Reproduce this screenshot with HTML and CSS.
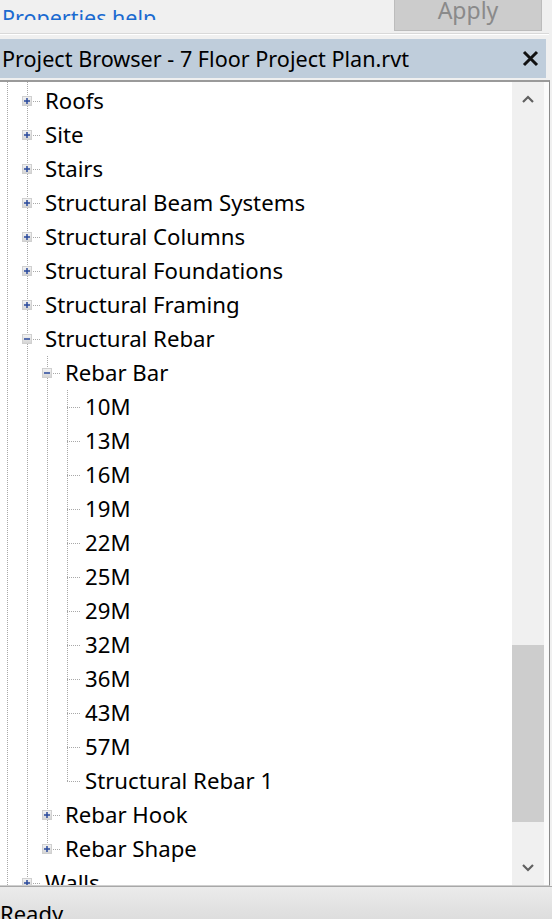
FILE: index.html
```html
<!DOCTYPE html>
<html>
<head>
<meta charset="utf-8">
<link rel="stylesheet" href="styles.css">
</head>
<body>
<div class="top">
  <div class="help-clip"><a class="help">Properties help</a></div>
  <div class="apply">Apply</div>
</div>
<div class="sep"></div>
<div class="titlebar">
  <span class="title">Project Browser - 7 Floor Project Plan.rvt</span>
  <svg class="close" width="17" height="17" viewBox="0 0 17 17"><path d="M2 2 L15 15 M15 2 L2 15" stroke="#111" stroke-width="3" fill="none"/></svg>
</div>
<div class="panel">
  <div class="tree">
    <div class="row"><span class="exp"><i class="box plus"></i></span><span class="label">Roofs</span></div>
    <div class="row"><span class="exp"><i class="box plus"></i></span><span class="label">Site</span></div>
    <div class="row"><span class="exp"><i class="box plus"></i></span><span class="label">Stairs</span></div>
    <div class="row"><span class="exp"><i class="box plus"></i></span><span class="label">Structural Beam Systems</span></div>
    <div class="row"><span class="exp"><i class="box plus"></i></span><span class="label">Structural Columns</span></div>
    <div class="row"><span class="exp"><i class="box plus"></i></span><span class="label">Structural Foundations</span></div>
    <div class="row"><span class="exp"><i class="box plus"></i></span><span class="label">Structural Framing</span></div>
    <div class="row"><span class="exp"><i class="box minus"></i></span><span class="label">Structural Rebar</span></div>
    <div class="row"><span class="ind"></span><span class="exp vfull"><i class="box minus"></i></span><span class="label">Rebar Bar</span></div>
    <div class="row"><span class="ind"></span><span class="ind vline"></span><span class="exp vfull"></span><span class="label">10M</span></div>
    <div class="row"><span class="ind"></span><span class="ind vline"></span><span class="exp vfull"></span><span class="label">13M</span></div>
    <div class="row"><span class="ind"></span><span class="ind vline"></span><span class="exp vfull"></span><span class="label">16M</span></div>
    <div class="row"><span class="ind"></span><span class="ind vline"></span><span class="exp vfull"></span><span class="label">19M</span></div>
    <div class="row"><span class="ind"></span><span class="ind vline"></span><span class="exp vfull"></span><span class="label">22M</span></div>
    <div class="row"><span class="ind"></span><span class="ind vline"></span><span class="exp vfull"></span><span class="label">25M</span></div>
    <div class="row"><span class="ind"></span><span class="ind vline"></span><span class="exp vfull"></span><span class="label">29M</span></div>
    <div class="row"><span class="ind"></span><span class="ind vline"></span><span class="exp vfull"></span><span class="label">32M</span></div>
    <div class="row"><span class="ind"></span><span class="ind vline"></span><span class="exp vfull"></span><span class="label">36M</span></div>
    <div class="row"><span class="ind"></span><span class="ind vline"></span><span class="exp vfull"></span><span class="label">43M</span></div>
    <div class="row"><span class="ind"></span><span class="ind vline"></span><span class="exp vfull"></span><span class="label">57M</span></div>
    <div class="row"><span class="ind"></span><span class="ind vline"></span><span class="exp vhalf"></span><span class="label">Structural Rebar 1</span></div>
    <div class="row"><span class="ind"></span><span class="exp vfull"><i class="box plus"></i></span><span class="label">Rebar Hook</span></div>
    <div class="row"><span class="ind"></span><span class="exp vhalf"><i class="box plus"></i></span><span class="label">Rebar Shape</span></div>
    <div class="row"><span class="exp"><i class="box plus"></i></span><span class="label">Walls</span></div>
  </div>
  <div class="scrollbar">
    <div class="arrow">
      <svg width="12" height="8" viewBox="0 0 12 8"><path d="M1 7 L6 2 L11 7" stroke="#606060" stroke-width="2.2" fill="none"/></svg>
    </div>
    <div class="track">
      <div class="thumb"></div>
    </div>
    <div class="arrow">
      <svg width="12" height="8" viewBox="0 0 12 8"><path d="M1 1 L6 6 L11 1" stroke="#606060" stroke-width="2.2" fill="none"/></svg>
    </div>
  </div>
</div>
<div class="status">Ready</div>
</body>
</html>
```
FILE: styles.css
```css
html, body {
  margin: 0;
  padding: 0;
  background: #f0f0f0;
  width: 552px;
  height: 919px;
  overflow: hidden;
  font-family: "Noto Sans", "Open Sans", sans-serif;
}

.top {
  height: 33px;
  display: flex;
  justify-content: space-between;
  align-items: flex-start;
  background: #f0f0f0;
}

.help-clip {
  height: 20px;
  overflow: hidden;
  padding-left: 2px;
}

.help {
  display: block;
  font-size: 21.5px;
  line-height: 22px;
  margin-top: 7px;
  color: #1a6ad0;
}

.apply {
  width: 148px;
  height: 31px;
  margin-right: 10px;
  box-sizing: border-box;
  border: 1px solid #bcbcbc;
  border-top: none;
  background: #cccccc;
  color: #8a8a8a;
  font-size: 23px;
  line-height: 21px;
  text-align: center;
}

.sep {
  height: 1px;
  border-top: 1px solid #d9d9d9;
  background: #ffffff;
  margin-bottom: 4px;
  width: 549px;
}

.titlebar {
  height: 39px;
  width: 546px;
  background: #bfcddb;
  display: flex;
  align-items: center;
  justify-content: space-between;
  box-sizing: border-box;
  padding-left: 2px;
  padding-right: 7px;
}

.title {
  font-size: 21.6px;
  color: #000;
  line-height: 39px;
}

.close {
  display: block;
}

.panel {
  margin-top: 2px;
  width: 550px;
  height: 806px;
  box-sizing: border-box;
  border-top: 2px solid #9a9a9a;
  border-right: 1px solid #8a8a8a;
  border-bottom: 1px solid #cfcfcf;
  background: #fbfbfb;
  display: flex;
  padding-right: 5px;
}

.tree {
  flex: 1;
  overflow: hidden;
  background-color: #ffffff;
  background-image:
    repeating-linear-gradient(to bottom, #a8a8a8 0 1px, transparent 1px 2px),
    repeating-linear-gradient(to bottom, #a8a8a8 0 1px, transparent 1px 2px);
  background-size: 1px 100%, 1px 100%;
  background-position: 7px 0, 27px 0;
  background-repeat: no-repeat;
  padding-top: 2px;
  padding-left: 17px;
}

.row {
  height: 34px;
  display: flex;
  align-items: center;
}

.ind {
  width: 20px;
  height: 34px;
  flex: none;
  position: relative;
}

.vline::before {
  content: "";
  position: absolute;
  left: 10px;
  top: 0;
  width: 1px;
  height: 34px;
  background: repeating-linear-gradient(to bottom, #a8a8a8 0 1px, transparent 1px 2px);
}

.exp {
  width: 20px;
  height: 34px;
  flex: none;
  position: relative;
}

.exp::after {
  content: "";
  position: absolute;
  left: 10px;
  top: 17px;
  width: 14px;
  height: 1px;
  background: repeating-linear-gradient(to right, #a8a8a8 0 1px, transparent 1px 2px);
}

.vfull::before,
.vhalf::before {
  content: "";
  position: absolute;
  left: 10px;
  top: 0;
  width: 1px;
  height: 34px;
  background: repeating-linear-gradient(to bottom, #a8a8a8 0 1px, transparent 1px 2px);
}

.vhalf::before {
  height: 18px;
}

.box {
  position: absolute;
  left: 5px;
  top: 12px;
  width: 10px;
  height: 10px;
  box-sizing: border-box;
  border: 1px solid #d0d0d0;
  background: linear-gradient(to bottom, #f2f2f2, #d6d6d6);
  z-index: 2;
}

.box::before {
  content: "";
  position: absolute;
  left: 1px;
  top: 3px;
  width: 6px;
  height: 2px;
  background: #2a4a9c;
  transform: scaleY(0.75);
}

.plus::after {
  content: "";
  position: absolute;
  left: 3px;
  top: 1px;
  width: 2px;
  height: 6px;
  background: #2a4a9c;
  transform: scaleX(0.75);
}

.label {
  margin-left: 8px;
  font-size: 22.2px;
  color: #000;
  white-space: nowrap;
  line-height: 34px;
}

.scrollbar {
  width: 32px;
  flex: none;
  background: #f0f0f0;
  display: flex;
  flex-direction: column;
}

.arrow {
  height: 34px;
  flex: none;
  display: flex;
  align-items: center;
  justify-content: center;
}

.track {
  flex: 1;
  display: flex;
  flex-direction: column;
  justify-content: flex-end;
  padding-bottom: 29px;
}

.thumb {
  height: 177px;
  background: #cdcdcd;
}

.status {
  height: 32px;
  border-top: 1px solid #a8a8a8;
  background: linear-gradient(to bottom, #ebebeb, #d9d9d9);
  font-size: 22px;
  line-height: 32px;
  padding-top: 10px;
  color: #000;
}
```
